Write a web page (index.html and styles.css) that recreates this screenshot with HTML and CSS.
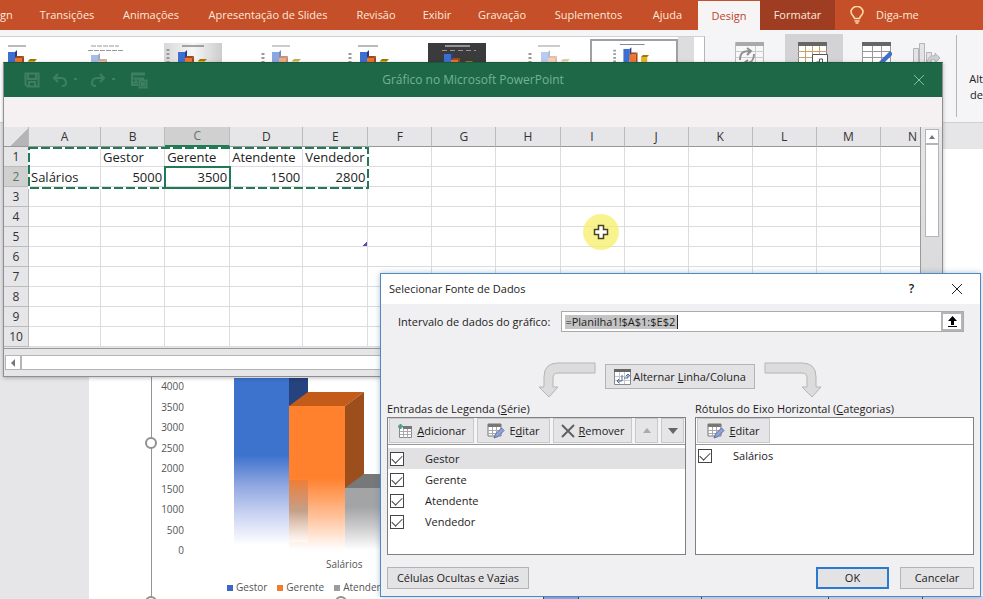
FILE: index.html
```html
<!DOCTYPE html>
<html lang="pt-BR">
<head>
<meta charset="utf-8">
<title>Selecionar Fonte de Dados</title>
<link rel="stylesheet" href="styles.css">
</head>
<body>
<svg class="defs" width="0" height="0" aria-hidden="true">
  <defs>
    <g id="bars"><path d="M2 5h7v20H2z" fill="#3c6fd0"/><path d="M9 5l2-2v14H9z" fill="#24408c"/><path d="M9 11h7v14H9z" fill="#ee7430"/><path d="M9 11l2-2h7l-2 2z" fill="#a04a18"/><path d="M16 11l2-2v14h-2z" fill="#a04a18"/><path d="M22 14h7v9h-7z" fill="#e8b320"/><path d="M22 14l2-2h7l-2 2z" fill="#9a7a14"/></g>
    <g id="grid-edit"><path d="M1 1h13v12H1z" fill="#fff" stroke="#777"/><path d="M1 1h13v3H1z" fill="#777"/><path d="M1 7.500h13M1 10.500h13M5.500 4v9M9.500 4v9" stroke="#aaa" fill="none"/><path d="M7 15l1.500-4 6-6 2.500 2.500-6 6z" fill="#8fa3d8" stroke="#5b6cab"/></g>
  </defs>
</svg>

<div class="app">
  <nav class="tabs">
    <a class="tab first" href="#">gn</a>
    <a class="tab" href="#">Transições</a>
    <a class="tab" href="#">Animações</a>
    <a class="tab" href="#">Apresentação de Slides</a>
    <a class="tab" href="#">Revisão</a>
    <a class="tab" href="#">Exibir</a>
    <a class="tab" href="#">Gravação</a>
    <a class="tab" href="#">Suplementos</a>
    <a class="tab" href="#">Ajuda</a>
    <a class="tab active" href="#">Design</a>
    <a class="tab context" href="#">Formatar</a>
    <a class="tab tell" href="#"><svg width="14" height="18" viewBox="0 0 14 18" fill="none" stroke="#ffdca8" stroke-width="1.500"><path d="M4.500 12.500C4.500 10 1 9.500 1 6a6 5.500 0 0 1 12 0c0 3.500-3.500 4-3.500 6.500zM4.500 15h5M5.500 17h3"/></svg>Diga-me</a>
  </nav>

  <section class="ribbon">
    <div class="gallery">
      <svg class="thumb" viewBox="0 0 58 34"><path d="M8 3h18" stroke="#777"/><use href="#bars" x="6" y="4"/></svg>
      <svg class="thumb" viewBox="0 0 58 34"><path d="M3 3h28M0 7.500h35" stroke="#999" stroke-dasharray="5 1"/><use href="#bars" x="1" y="7" opacity=".45"/></svg>
      <svg class="thumb shaded" viewBox="0 0 58 34"><path d="M18 3h22" stroke="#555"/><path d="M4 6v20" stroke="#999" stroke-width="3" stroke-dasharray="2 2"/><use href="#bars" x="12" y="4"/></svg>
      <svg class="thumb" viewBox="0 0 58 34"><path d="M20 3h18" stroke="#999"/><path d="M11 10v16" stroke="#999" stroke-width="3" stroke-dasharray="2 2"/><use href="#bars" x="18" y="4" opacity=".6"/></svg>
      <svg class="thumb" viewBox="0 0 58 34"><path d="M18 3h20" stroke="#777"/><path d="M10 10v16" stroke="#999" stroke-width="3" stroke-dasharray="2 2"/><use href="#bars" x="18" y="4"/></svg>
      <svg class="thumb dark" viewBox="0 0 58 34"><path d="M17 3h25" stroke="#eee"/><path d="M14 7.500h34" stroke="#999" stroke-dasharray="5 3"/><use href="#bars" x="14" y="6"/></svg>
      <svg class="thumb" viewBox="0 0 58 34"><path d="M22 3h22" stroke="#999"/><path d="M14 10v16" stroke="#999" stroke-width="3" stroke-dasharray="2 2"/><use href="#bars" x="23" y="4" opacity=".35"/></svg>
      <svg class="thumb picked" viewBox="0 0 84 34"><path d="M26 4h28" stroke="#777"/><path d="M20 10v16" stroke="#999" stroke-width="3" stroke-dasharray="2 2"/><use href="#bars" x="28" y="4"/></svg>
      <div class="gallery-scroll"></div>
    </div>
    <div class="data-tools">
      <svg width="30" height="30" viewBox="0 0 30 30" fill="none"><path d="M.5 2.500h28v27H.5z" fill="#f8f8fa" stroke="#bbb"/><path d="M1 2h28v4H1z" fill="#a9a9a9"/><path d="M1 11.500h28M1 17.500h28M1 23.500h28M20.500 6v24" stroke="#ccc"/><path d="M5 20c0-8 4-9 10-9m-3-3l4 3-4 4M19 14c0 7-3 9-9 9m3-3l-4 3 4 3" stroke="#8f8f8f" stroke-width="2"/></svg>
      <div class="tool-on"><svg width="32" height="30" viewBox="0 0 32 30" fill="none"><path d="M.5 2.500h28v27H.5z" fill="#fff" stroke="#888"/><path d="M0 2h29v4H0z" fill="#666"/><path d="M0 11.500h29M0 17.500h29M0 23.500h29M7.500 6v24M14.500 6v24M21.500 6v24" stroke="#c9a06a"/><path d="M14.500 14.500h15v15h-15z" fill="#fff" stroke="#555"/><path d="M18.500 29v-7h3v7v-10h3v10v-5h3v5" stroke="#555"/></svg></div>
      <svg width="30" height="30" viewBox="0 0 30 30" fill="none"><path d="M.5 2.500h28v27H.5z" fill="#fff" stroke="#999"/><path d="M0 2h29v4H0z" fill="#666"/><path d="M0 11.500h29M0 17.500h29M0 23.500h29M10.500 6v24M19.500 6v24" stroke="#999"/><path d="M14 28l2-5 12-12 3 3-12 12z" fill="#3f6fc8"/></svg>
      <svg width="30" height="30" viewBox="0 0 30 30" fill="#e4e4e6" stroke="#b4b4b6"><path d="M1.500 8.500h5v21h-5zM7.500 3.500h5v26h-5zM14.500 12.500h5v17h-5z"/><path d="M15 23c1-7 5-8 8-7v-3l5 5-5 5v-3c-3-1-5 0-5 3z" fill="#cfcfd1"/></svg>
    </div>
    <div class="ribbon-end">Alt<br>de</div>
  </section>

  <main class="workspace">
    <div class="slide">
      <div class="chart">
        <i class="handle side"></i><i class="handle corner"></i><i class="handle mid"></i>
        <div class="axis"><span>4000</span><span>3500</span><span>3000</span><span>2500</span><span>2000</span><span>1500</span><span>1000</span><span>500</span><span>0</span></div>
        <svg class="plot" viewBox="0 0 200 180" width="200" height="180">
          <defs>
            <linearGradient id="blue" x2="0" y2="1"><stop offset=".45" stop-color="#3d73cd"/><stop offset=".62" stop-color="#8fa6e0"/><stop offset=".8" stop-color="#ccd5f3"/><stop offset=".97" stop-color="#fff"/></linearGradient>
            <linearGradient id="orange" x2="0" y2="1"><stop offset=".5" stop-color="#ff812e"/><stop offset=".75" stop-color="#ffbd92"/><stop offset="1" stop-color="#fff"/></linearGradient>
            <linearGradient id="brown" x2="0" y2="1"><stop stop-color="#ee7e38"/><stop offset=".5" stop-color="#c4a08a"/><stop offset="1" stop-color="#fff" stop-opacity=".6"/></linearGradient>
            <linearGradient id="gray" x2="0" y2="1"><stop offset=".3" stop-color="#a3a4a6"/><stop offset=".6" stop-color="#c8c8ca"/><stop offset="1" stop-color="#fff"/></linearGradient>
          </defs>
          <path d="M44 0h55v172H44z" fill="url(#blue)"/>
          <path d="M99 0h19v30H99z" fill="#26427f"/>
          <path d="M99 28l19-14h56l-19 14z" fill="#c45c19"/>
          <path d="M155 28l19-14v84l-19 14z" fill="#9c4f1c"/>
          <path d="M99 28h56v144H99z" fill="url(#orange)"/>
          <path d="M99 102h19v62H99z" fill="url(#brown)"/>
          <path d="M155 110l19-14h26v14z" fill="#77787a"/>
          <path d="M155 110h45v62h-45z" fill="url(#gray)"/>
        </svg>
        <div class="category">Salários</div>
        <div class="legend"><span class="key gestor">Gestor</span><span class="key gerente">Gerente</span><span class="key atendente">Atendente</span></div>
      </div>
      <div class="slide-table"><span></span><span></span><span></span><span></span><span></span></div>
    </div>
  </main>
</div>

<section class="sheet-window">
  <header class="sheet-title">
    <div class="quick">
      <svg width="16" height="16" viewBox="0 0 16 16"><path d="M1.500 1.500h13v13h-11l-2-2zM4 2v5h8V2M5 14v-4h6v4"/></svg>
      <svg width="26" height="16" viewBox="0 0 26 16"><path d="M6 2L2 6l4 4M2 6h7c4 0 5 3 5 5s-1 3-4 3"/><path d="M22 7h3"/></svg>
      <svg width="28" height="16" viewBox="0 0 28 16"><path d="M10 2l4 4-4 4M14 6H7c-4 0-5 3-5 5s1 3 4 3"/><path d="M22 7h3"/></svg>
      <svg width="18" height="18" viewBox="0 0 18 18"><path d="M1 2.500h14M1 3.500h14M2 7.500h12M2 11.500h6M2 2v12h6M6 7v5M9.500 9.500h7v7h-7zM12 11v4M14 11v4"/></svg>
    </div>
    <h1>Gráfico no Microsoft PowerPoint</h1>
    <button class="sheet-close" aria-label="Fechar"><svg width="10" height="10" viewBox="0 0 10 10"><path d="M0 0l10 10M10 0L0 10"/></svg></button>
  </header>
  <div class="sheet-gap"></div>
  <div class="sheet-body">
    <div class="cells">
      <table>
        <colgroup><col class="c-num"><col class="c-a"><col class="c-b"><col class="c-c"><col class="c-d"><col class="c-c"><col span="9" class="c-b"></colgroup>
        <thead><tr><th class="all"></th><th>A</th><th>B</th><th class="on">C</th><th>D</th><th>E</th><th>F</th><th>G</th><th>H</th><th>I</th><th>J</th><th>K</th><th>L</th><th>M</th><th>N</th></tr></thead>
        <tbody>
          <tr><th>1</th><td></td><td>Gestor</td><td>Gerente</td><td>Atendente</td><td>Vendedor</td><td></td><td></td><td></td><td></td><td></td><td></td><td></td><td></td><td></td></tr>
          <tr><th class="on">2</th><td>Salários</td><td class="n">5000</td><td class="n">3500</td><td class="n">1500</td><td class="n">2800</td><td></td><td></td><td></td><td></td><td></td><td></td><td></td><td></td><td></td></tr>
          <tr><th>3</th><td></td><td></td><td></td><td></td><td></td><td></td><td></td><td></td><td></td><td></td><td></td><td></td><td></td><td></td></tr>
          <tr><th>4</th><td></td><td></td><td></td><td></td><td></td><td></td><td></td><td></td><td></td><td></td><td></td><td></td><td></td><td></td></tr>
          <tr><th>5</th><td></td><td></td><td></td><td></td><td class="range-end"></td><td></td><td></td><td></td><td></td><td></td><td></td><td></td><td></td><td></td></tr>
          <tr><th>6</th><td></td><td></td><td></td><td></td><td></td><td></td><td></td><td></td><td></td><td></td><td></td><td></td><td></td><td></td></tr>
          <tr><th>7</th><td></td><td></td><td></td><td></td><td></td><td></td><td></td><td></td><td></td><td></td><td></td><td></td><td></td><td></td></tr>
          <tr><th>8</th><td></td><td></td><td></td><td></td><td></td><td></td><td></td><td></td><td></td><td></td><td></td><td></td><td></td><td></td></tr>
          <tr><th>9</th><td></td><td></td><td></td><td></td><td></td><td></td><td></td><td></td><td></td><td></td><td></td><td></td><td></td><td></td></tr>
          <tr><th>10</th><td></td><td></td><td></td><td></td><td></td><td></td><td></td><td></td><td></td><td></td><td></td><td></td><td></td><td></td></tr>
        </tbody>
      </table>
      <svg class="marquee" width="341" height="42" viewBox="0 0 341 42"><path d="M1 1h339v40H1z" fill="none" stroke="#fff" stroke-width="2"/><path d="M1 1h339v40H1z" fill="none" stroke="#217a55" stroke-width="2" stroke-dasharray="9 3"/></svg>
      <div class="cell-cursor"></div>
    </div>
    <div class="vscroll"><span class="up"></span><span class="thumb-v"></span></div>
  </div>
  <div class="hscroll"><span class="left"></span><span class="track"></span></div>
</section>

<svg class="pointer" width="38" height="38" viewBox="0 0 38 38"><circle cx="19" cy="19" r="18" fill="#f5ef6a" opacity=".75"/><path d="M16.500 12.500h5v4h4v5h-4v4h-5v-4h-4v-5h4z" fill="#fff" stroke="#4a4320" stroke-width="1.500"/></svg>

<section class="dialog" role="dialog" aria-labelledby="dlg-title">
  <header class="dialog-title">
    <h2 id="dlg-title">Selecionar Fonte de Dados</h2>
    <button class="bare" aria-label="Ajuda">?</button>
    <button class="bare" aria-label="Fechar"><svg width="10" height="10" viewBox="0 0 10 10"><path d="M0 0l10 10M10 0L0 10" stroke="#222"/></svg></button>
  </header>
  <div class="range">
    <label for="range">Intervalo de dados do <u>g</u>ráfico:</label>
    <div class="range-box"><div class="range-field"><input id="range" type="text" value="=Planilha1!$A$1:$E$2"></div><button class="collapse" aria-label="Recolher"><svg width="11" height="12" viewBox="0 0 11 12"><path d="M5.500 0L10 5H7v4H4V5H1zM1 10h9v1H1z" fill="#000"/></svg></button></div>
  </div>
  <div class="switch">
    <svg width="58" height="38" viewBox="0 0 58 38"><path d="M57 1v10H20q-5 0-5 5v9h5l-9 10-10-10h5V15Q6 1 20 1z" fill="#dcdcdc" stroke="#b5b5b5"/></svg>
    <button class="btn swap"><svg width="17" height="16" viewBox="0 0 17 16" fill="none"><path d="M.5.500h16v15H.5z" fill="#fff" stroke="#888"/><path d="M0 0h17v3H0z" fill="#666"/><path d="M1 7.500h15M1 11.500h15M5.500 3v12M10.500 3v12" stroke="#c6c6c6"/><path d="M8 6v6H3m2-2l-2 2 2 2M10 9h4V5m-2 2l2-2 2 2" stroke="#4569a8"/></svg><span>Alternar <u>L</u>inha/Coluna</span></button>
    <svg width="58" height="38" viewBox="0 0 58 38"><path d="M1 1v10h37q5 0 5 5v9h-5l10 10 9-10h-5V15Q52 1 38 1z" fill="#dcdcdc" stroke="#b5b5b5"/></svg>
  </div>
  <div class="lists">
    <section>
      <h3>Entradas de Legenda (<u>S</u>érie)</h3>
      <div class="list">
        <div class="tools full">
          <button class="tool add"><svg width="16" height="16" viewBox="0 0 16 16" fill="none"><path d="M2.500 3.500h12v11h-12z" fill="#fff" stroke="#888"/><path d="M6 3h9v3H6z" fill="#777"/><path d="M3 8.500h12M3 11.500h12M6.500 6v9M10.500 6v9" stroke="#aaa"/><path d="M3.500 1v5M1 3.500h5" stroke="#48a07a" stroke-width="2"/></svg><span><u>A</u>dicionar</span></button>
          <button class="tool edit"><svg width="18" height="16" viewBox="0 0 18 16"><use href="#grid-edit"/></svg><span>E<u>d</u>itar</span></button>
          <button class="tool remove"><svg width="14" height="14" viewBox="0 0 14 14"><path d="M1 1l12 12M13 1L1 13" stroke="#606060" stroke-width="2" fill="none"/></svg><span><u>R</u>emover</span></button>
          <button class="tool move" aria-label="Mover para cima"><svg width="8" height="5" viewBox="0 0 8 5"><path d="M4 0l4 5H0z" fill="#aaa"/></svg></button>
          <button class="tool move" aria-label="Mover para baixo"><svg width="10" height="6" viewBox="0 0 10 6"><path d="M0 0h10L5 6z" fill="#666"/></svg></button>
        </div>
        <div class="items series">
          <label class="item selected"><input type="checkbox" checked>Gestor</label>
          <label class="item"><input type="checkbox" checked>Gerente</label>
          <label class="item"><input type="checkbox" checked>Atendente</label>
          <label class="item"><input type="checkbox" checked>Vendedor</label>
        </div>
      </div>
    </section>
    <section>
      <h3>Rótulos do Eixo Horizontal (<u>C</u>ategorias)</h3>
      <div class="list">
        <div class="tools">
          <button class="tool edit"><svg width="18" height="16" viewBox="0 0 18 16"><use href="#grid-edit"/></svg><span><u>E</u>ditar</span></button>
        </div>
        <div class="items cats">
          <label class="item"><input type="checkbox" checked>Salários</label>
        </div>
      </div>
    </section>
  </div>
  <footer class="actions">
    <button class="btn hidden-cells"><span>Células Ocultas e Va<u>z</u>ias</span></button>
    <button class="btn ok">OK</button>
    <button class="btn cancel">Cancelar</button>
  </footer>
</section>
</body>
</html>
```
FILE: styles.css
```css
* { box-sizing: border-box; }
body {
  margin: 0;
  height: 100vh;
  overflow: hidden;
  position: relative;
  font: 500 11px/16px "Open Sans", "Noto Sans", sans-serif;
  color: #222;
  background: #e6e5e8;
}
svg { display: block; flex: none; }
.defs { position: absolute; }
h1, h2, h3 { margin: 0; font-size: 11px; font-weight: 500; }
button, input { font: inherit; color: inherit; }
button { display: flex; align-items: center; justify-content: center; padding: 0; white-space: nowrap; }

/* PowerPoint */
.app { height: 100%; display: flex; flex-direction: column; }
.tabs {
  display: grid;
  grid-template-columns: 26px 82px 86px 148px 68px 54px 76px 97px 61px 62px 75px 1fr;
  height: 30px;
  flex: none;
  background: #c44f28;
}
.tab { display: flex; align-items: center; justify-content: center; color: #ffe9dc; text-decoration: none; white-space: nowrap; }
.tab.first { justify-content: flex-start; }
.tab.active { background: #f6f4f5; color: #b9472c; margin-top: 1px; }
.tab.context { background: #9f3d22; }
.tab.tell { justify-content: flex-start; gap: 12px; padding-left: 15px; }
.ribbon { display: flex; flex: none; height: 93px; background: #f5f4f6; border-bottom: 1px solid #d0cfd2; overflow: hidden; }
.gallery { display: flex; align-items: flex-start; gap: 30px; width: 705px; flex: none; margin-top: 6px; padding-top: 6px; background: #fff; border-top: 1px solid #d0d0d2; border-right: 1px solid #b5b5b7; }
.thumb { width: 58px; height: 34px; }
.thumb.shaded { background: linear-gradient(90deg, #d8d8da, #f6f6f6 50%, #ccc); margin-left: -12px; }
.thumb.dark { background: #3b3b3d; }
.thumb.picked { width: 88px; border: 2px solid #a0a0a2; margin: -4px -30px 0 -14px; }
.gallery-scroll { width: 16px; height: 60px; background: #dddcde; margin-top: -6px; }
.data-tools { display: flex; align-items: flex-start; justify-content: space-between; flex: 1; margin: 8px 14px 0 30px; }
.data-tools > svg { margin-top: 2px; }
.tool-on { background: #d3d2d4; padding: 6px 13px 30px; margin-top: -4px; }
.ribbon-end { width: 27px; flex: none; margin: 5px 0; padding-top: 36px; padding-left: 9px; border-left: 1px solid #b5b5b7; white-space: nowrap; text-align: right; }
.workspace { flex: 1; min-height: 0; padding: 26px 0 0 89px; }
.slide { position: relative; background: #fff; height: 100%; padding-left: 62px; }
.slide-table { position: absolute; left: 454px; right: 0; bottom: 0; height: 3px; display: grid; grid-template-columns: 35px 123px 127px 94px 1fr; background: #cfdcf0; }
.slide-table span { border-left: 1px solid #30406a; }
.slide-table span:first-child { background: #98a8e4; }

/* Chart */
.chart { position: relative; height: 100%; border-left: 1px solid #949494; padding-top: 229px; display: grid; grid-template: 179px 22px 22px / 32px 6px 1fr; color: #555; font-size: 10px; }
.axis { display: flex; flex-direction: column; justify-content: space-between; text-align: right; padding-top: 1px; }
.axis span { line-height: 14px; }
.plot { grid-column: 3; }
.category { grid-column: 3; padding-left: 136px; line-height: 14px; }
.legend { grid-column: 3; display: flex; gap: 10px; padding-left: 37px; }
.key::before { content: ""; display: inline-block; width: 6px; height: 6px; margin-right: 3px; background: currentColor; }
.gestor::before { color: #3e66c8; }
.gerente::before { color: #f07c2c; }
.atendente::before { color: #9c9c9c; }
.handle { position: absolute; width: 12px; height: 12px; border: 2px solid #909090; border-radius: 50%; background: #fff; }
.handle.side { left: -7px; top: 288px; }
.handle.corner { left: -7px; bottom: -9px; }
.handle.mid { left: 183px; bottom: -9px; }

/* Spreadsheet window */
.sheet-window { position: absolute; left: 3px; right: 40px; top: 62px; background: #e6e5e7; border: 1px solid #8f8f91; border-top-color: #165a3b; box-shadow: 0 1px 4px #0004; }
.sheet-title { display: grid; grid-template-columns: 1fr auto 1fr; align-items: center; height: 34px; background: #1f6847; }
.sheet-title h1 { color: #74b295; font-size: 12px; font-weight: 400; }
.quick { display: flex; align-items: center; gap: 12px; padding-left: 20px; }
.quick path { fill: none; stroke: #3f7f61; stroke-width: 2; }
.sheet-close { justify-self: end; width: 46px; height: 30px; background: none; border: 0; }
.sheet-close path { stroke: #7fc0a2; }
.sheet-gap { height: 30px; background: #f5f0f1; }
.sheet-body { display: flex; }
.cells { flex: 1; min-width: 0; height: 222px; overflow: hidden; position: relative; border-right: 1px solid #999; border-bottom: 1px solid #999; }
table { table-layout: fixed; width: 941px; border-collapse: separate; border-spacing: 0; background: #fff; font-size: 13px; }
.c-num { width: 25px; }
.c-a { width: 72px; }
.c-b { width: 64px; }
.c-c { width: 65px; }
.c-d { width: 73px; }
td, th { height: 20px; padding: 0 2px; line-height: 18px; border-right: 1px solid #dcdbde; border-bottom: 1px solid #dcdbde; overflow: hidden; white-space: nowrap; }
th { padding: 0; background: #e6e5e7; font-size: 12px; font-weight: 500; color: #333; text-align: center; border-color: #bbb; }
thead th { border-bottom-color: #999; }
thead th.on { background: #d0d0d1; color: #5c7468; border-bottom: 2px solid #217a55; }
tbody th.on { background: #d0d0d1; color: #5c7468; }
.all { background: linear-gradient(135deg, #e6e5e7 60%, #b5b5b7 60%); }
.n { text-align: right; }
.range-end { background: linear-gradient(135deg, #fff 95%, #5a50b0 95%); }
.marquee { position: absolute; left: 24px; top: 20px; }
.cell-cursor { position: absolute; left: 160px; top: 39px; width: 67px; height: 23px; border: 2px solid #217a55; }
.vscroll { width: 21px; padding: 2px 3px 0 4px; background: linear-gradient(#e6e5e7, #d4d4d6); }
.vscroll span, .hscroll span { background: #fff; border: 1px solid #b5b5b7; }
.vscroll .up, .hscroll .left { display: flex; align-items: center; justify-content: center; }
.up { height: 15px; }
.up::before { content: ""; border: 3px solid transparent; border-top: 0; border-bottom: 4px solid #777; }
.thumb-v { display: block; height: 93px; }
.hscroll { display: flex; height: 27px; padding: 6px 20px 6px 1px; }
.left { width: 16px; }
.left::before { content: ""; border: 4px solid transparent; border-left: 0; border-right: 4px solid #777; }
.track { flex: 1; }
.pointer { position: absolute; left: 582px; top: 213px; }

/* Dialog */
.dialog { position: absolute; left: 380px; right: 2px; top: 273px; background: #f0eff1; border: 1px solid #4e8ac0; box-shadow: 0 0 6px #3d6d9c66; color: #1c1c1c; }
.dialog-title { display: flex; align-items: center; height: 30px; padding: 0 1px 0 8px; background: #fff; }
.dialog-title h2 { flex: 1; }
.bare { width: 45px; height: 28px; background: none; border: 0; font-size: 12px; font-weight: 600; }
.range { display: flex; align-items: center; gap: 11px; margin: 7px 16px 0 17px; }
.range-box { flex: 1; display: flex; height: 21px; border: 1px solid #aaa; background: #fff; }
.range-field { flex: 1; display: flex; align-items: center; padding-left: 3px; }
.range input { width: 113px; height: 14px; padding: 0; border: 0; border-right: 1px solid #222; outline: 0; background: #c4c4c5; }
.collapse { width: 22px; border: 2px solid #b5b5b7; background: #fff; }
.switch { display: flex; gap: 9px; height: 38px; margin: 30px 0 0 157px; }
.btn { background: #e3e2e4; border: 1px solid #b4b4b6; height: 22px; }
.swap { width: 150px; height: 25px; margin-top: 2px; gap: 2px; }
.lists { display: grid; grid-template-columns: 299fr 279fr; gap: 9px; margin: 1px 6px 0; }
.list { height: 138px; border: 1px solid #808080; background: #fff; }
.tools { display: flex; gap: 3px; height: 27px; padding: 0 1px 1px; border-bottom: 1px solid #999; }
.tools.full { background: #f4f4f5; }
.tool { gap: 4px; background: #e5e4e6; border: 1px solid #c8c8ca; }
.add { flex: 0 1 85px; }
.edit { flex: 0 1 73px; }
.remove { flex: 0 1 79px; }
.move { flex: 0 1 23px; }
.item { display: flex; align-items: center; height: 21px; padding-left: 2px; }
.item.selected { background: #e1e0e3; }
.series { padding-top: 3px; }
.item input { appearance: none; width: 14px; height: 14px; margin: 0 21px 0 0; border: 1px solid #444; background: #fff; display: grid; place-items: center; }
.item input:checked::before { content: ""; width: 9px; height: 5px; border: solid #444; border-width: 0 0 1px 1px; transform: rotate(-45deg); margin-top: -2px; }
.actions { display: flex; gap: 11px; margin: 12px 6px 7px; }
.hidden-cells { width: 142px; margin-right: auto; }
.ok { width: 73px; border: 2px solid #2a7bd0; }
.cancel { width: 74px; }
```
